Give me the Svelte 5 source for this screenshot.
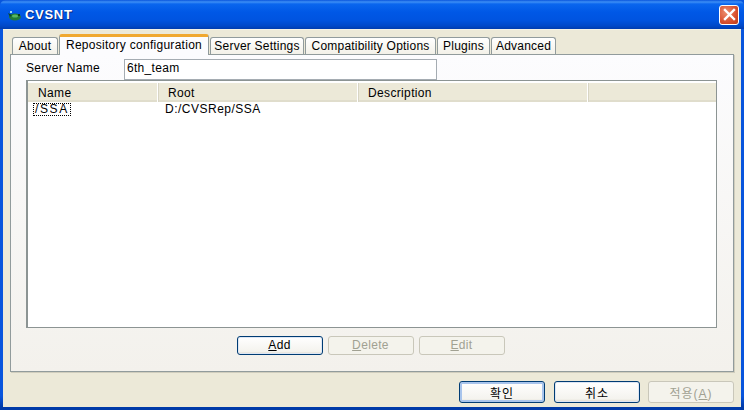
<script>
	// tabs of the property sheet, in order
	const tabs = [
		{ label: 'About', width: 46 },
		{ label: 'Repository configuration', width: 150, active: true },
		{ label: 'Server Settings', width: 94 },
		{ label: 'Compatibility Options', width: 131 },
		{ label: 'Plugins', width: 53 },
		{ label: 'Advanced', width: 65 }
	];
	const columns = [
		{ label: 'Name', width: 130 },
		{ label: 'Root', width: 200 },
		{ label: 'Description', width: 230 }
	];
</script>

<div class="window">
	<header class="titlebar">
		<svg class="app-icon" width="18" height="16" viewBox="0 0 18 16">
			<ellipse cx="10" cy="10" rx="6" ry="3.5" fill="#1f7a3a" />
			<ellipse cx="10" cy="9" rx="3" ry="1.6" fill="#58b860" />
			<path d="M3 6 L7 8 L5 10 Z" fill="#0d4a24" />
			<rect x="5" y="4" width="2" height="2" fill="#9fd8f0" />
			<rect x="13" y="7" width="2" height="2" fill="#0b3d1e" />
		</svg>
		<span class="title">CVSNT</span>
		<button class="close" aria-label="Close">
			<svg width="13" height="13" viewBox="0 0 13 13">
				<path d="M2 2 L11 11 M11 2 L2 11" stroke="#fff" stroke-width="2.4" stroke-linecap="square" />
			</svg>
		</button>
	</header>

	<div class="client">
		<div class="tabs">
			{#each tabs as tab}
				<div class="tab" class:active={tab.active} style="width: {tab.width}px">{tab.label}</div>
			{/each}
		</div>

		<section class="panel">
			<div class="server-row">
				<span class="server-label">Server Name</span>
				<input class="server-input" value="6th_team" />
			</div>

			<div class="list">
				<div class="list-header">
					{#each columns as col}
						<div class="col" style="width: {col.width}px">{col.label}</div>
					{/each}
				</div>
				<div class="list-row">
					<span class="cell-name"><span class="focused">/SSA</span></span>
					<span class="cell-root">D:/CVSRep/SSA</span>
				</div>
			</div>

			<div class="list-buttons">
				<button class="btn default"><u>A</u>dd</button>
				<button class="btn" disabled><u>D</u>elete</button>
				<button class="btn" disabled><u>E</u>dit</button>
			</div>
		</section>

		<footer class="dialog-buttons">
			<button class="btn big primary">확인</button>
			<button class="btn big default">취소</button>
			<button class="btn big" disabled>적용(<u>A</u>)</button>
		</footer>
	</div>
</div>

<style>
	:global(body) {
		margin: 0;
	}

	.window {
		width: 744px;
		height: 410px;
		display: flex;
		flex-direction: column;
		overflow: hidden;
		font-family: "Liberation Sans", "Noto Sans CJK KR", sans-serif;
		font-size: 12px;
		color: #000;
		background: linear-gradient(#0855dd 396px, #003aa8 407px);
	}

	/* title bar */
	.titlebar {
		height: 29px;
		flex: none;
		display: flex;
		align-items: center;
		padding: 0 5px;
		box-sizing: border-box;
		background: linear-gradient(#0a55dc 0, #3d8ff5 2px, #0a66ee 4px, #0058e6 12px, #0054e0 20px, #0048c8 26px, #003cae 29px);
		border-radius: 6px 6px 0 0;
	}

	.app-icon {
		flex: none;
	}

	.title {
		margin-left: 2px;
		color: #fff;
		font-weight: bold;
		font-size: 13px;
		letter-spacing: 0.7px;
		text-shadow: 1px 1px 0 #0a2a80;
	}

	.close {
		margin-left: auto;
		width: 20px;
		height: 20px;
		padding: 0;
		display: flex;
		align-items: center;
		justify-content: center;
		border: 1px solid #fff;
		border-radius: 3px;
		background: radial-gradient(circle at 35% 35%, #ec8f70, #d9502f 60%, #bb3a18);
	}

	/* dialog area */
	.client {
		flex: 1;
		margin: 0 3px 3px 3px;
		padding: 5px 7px 0 7px;
		display: flex;
		flex-direction: column;
		background: #ece9d8;
		box-shadow: inset 0 1px 0 #f4f2e6;
	}

	.tabs {
		display: flex;
		align-items: flex-end;
		height: 20px;
		padding-left: 2px;
		position: relative;
		z-index: 1;
	}

	.tab {
		box-sizing: border-box;
		height: 17px;
		margin-left: 1px;
		text-align: center;
		line-height: 17px;
		background: linear-gradient(#fff, #f3f1e8);
		border: 1px solid #919b9c;
		border-bottom: none;
		border-radius: 3px 3px 0 0;
		letter-spacing: 0.22px;
		white-space: nowrap;
		overflow: hidden;
	}

	.tab:first-child {
		margin-left: 0;
	}

	.tab.active {
		height: 21px;
		margin-bottom: -1px;
		line-height: 16px;
		background: #fcfcfe;
		border-top: 3px solid #f0a830;
		letter-spacing: 0.28px;
		position: relative;
	}

	.panel {
		height: 318px;
		box-sizing: border-box;
		padding: 4px 16px 0 15px;
		display: flex;
		flex-direction: column;
		border: 1px solid #919b9c;
		box-shadow: 1px 1px 0 #d0cdbd;
		background: linear-gradient(#fcfcfe, #f3f1ec);
	}

	.server-row {
		display: flex;
		align-items: center;
		height: 21px;
	}

	.server-label {
		width: 98px;
		padding-bottom: 3px;
		letter-spacing: 0.3px;
		flex: none;
	}

	.server-input {
		box-sizing: border-box;
		width: 313px;
		height: 21px;
		padding: 0 2px 3px;
		font: inherit;
		letter-spacing: 0.3px;
		background: #fff;
		border: 1px solid #a5acb2;
		border-radius: 0;
		outline: none;
	}

	/* list view */
	.list {
		height: 248px;
		box-sizing: border-box;
		background: #fff;
		border: 1px solid #8c9493;
		border-left-width: 2px;
		padding-top: 2px;
		flex: none;
	}

	.list-header {
		height: 19px;
		display: flex;
		background: #ece9d8;
		box-shadow: inset 0 -2px 0 #e0ddcc;
	}

	.col {
		box-sizing: border-box;
		padding-left: 10px;
		line-height: 20px;
		letter-spacing: 0.35px;
		border-right: 1px solid #fff;
		box-shadow: 1px 0 0 #d8d5c4;
	}

	.list-row {
		display: flex;
		height: 13px;
		margin-top: 1px;
		line-height: 12px;
		letter-spacing: 0.5px;
	}

	.cell-name {
		width: 137px;
		padding-left: 5px;
		box-sizing: border-box;
		flex: none;
	}

	.focused {
		display: inline-block;
		box-sizing: border-box;
		width: 38px;
		height: 13px;
		padding-left: 2px;
		letter-spacing: 1.6px;
		outline: 1px dotted #000;
		outline-offset: -1px;
	}

	.list-buttons {
		display: flex;
		justify-content: center;
		gap: 5px;
		margin-top: 8px;
		padding-right: 2px;
	}

	/* XP style button */
	.btn {
		box-sizing: border-box;
		width: 86px;
		height: 19px;
		padding: 0 0 2px;
		font: inherit;
		letter-spacing: 0.35px;
		color: #000;
		border: 1px solid #003c74;
		border-radius: 3px;
		background: linear-gradient(#fff, #f4f3ee 85%, #dcd8ca);
	}

	.btn.big {
		height: 22px;
		padding: 0;
		letter-spacing: 1px;
	}

	.btn.primary {
		margin-right: 1px;
		box-shadow: inset 0 0 0 2px #a8c4ec;
	}

	.btn.default {
		box-shadow: inset 0 0 0 1px #dde6f4;
	}

	.btn:disabled {
		color: #a1a192;
		border-color: #c9c7ba;
		background: #f4f3ec;
	}

	.dialog-buttons {
		display: flex;
		justify-content: flex-end;
		gap: 8px;
		margin-top: 9px;
	}
</style>
